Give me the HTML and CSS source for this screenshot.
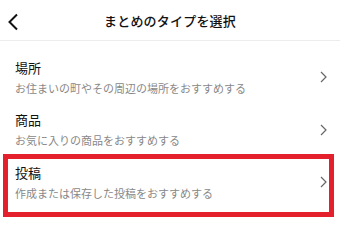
FILE: index.html
```html
<!DOCTYPE html>
<html lang="ja">
<head>
<meta charset="utf-8">
<link rel="stylesheet" href="styles.css">
</head>
<body>
<div class="screen">
  <header class="header">
    <span class="back">
      <svg width="12" height="18" viewBox="0 0 12 18"><path d="M10 1.5 L2.5 9 L10 16.5" fill="none" stroke="#111" stroke-width="2"/></svg>
    </span>
    <h1 class="title">まとめのタイプを選択</h1>
  </header>
  <ul class="list">
    <li class="item">
      <div class="texts">
        <div class="item-title">場所</div>
        <div class="item-sub">お住まいの町やその周辺の場所をおすすめする</div>
      </div>
      <svg class="chev" width="7" height="12" viewBox="0 0 7 12"><path d="M1 1 L6 6 L1 11" fill="none" stroke="#666" stroke-width="1.2"/></svg>
    </li>
    <li class="item">
      <div class="texts">
        <div class="item-title">商品</div>
        <div class="item-sub">お気に入りの商品をおすすめする</div>
      </div>
      <svg class="chev" width="7" height="12" viewBox="0 0 7 12"><path d="M1 1 L6 6 L1 11" fill="none" stroke="#666" stroke-width="1.2"/></svg>
    </li>
    <li class="item highlighted">
      <div class="texts">
        <div class="item-title">投稿</div>
        <div class="item-sub">作成または保存した投稿をおすすめする</div>
      </div>
      <svg class="chev" width="7" height="12" viewBox="0 0 7 12"><path d="M1 1 L6 6 L1 11" fill="none" stroke="#666" stroke-width="1.2"/></svg>
      <span class="mark"></span>
    </li>
  </ul>
</div>
</body>
</html>
```
FILE: styles.css
```css
* { box-sizing: border-box; }
html, body {
  margin: 0;
  padding: 0;
  background: #fff;
}
body {
  font-family: "Noto Sans CJK JP", "Noto Sans", sans-serif;
  color: #111;
}
.screen {
  width: 340px;
  height: 226px;
  overflow: hidden;
}
.header {
  height: 41px;
  border-bottom: 1px solid #ececec;
  display: flex;
  align-items: center;
  justify-content: center;
  position: relative;
}
.back {
  position: absolute;
  left: 7px;
  top: 13px;
  display: flex;
}
.title {
  margin: 0;
  font-size: 13px;
  font-weight: 500;
  line-height: 18px;
  padding-top: 1px;
  letter-spacing: 0.2px;
}
.list {
  list-style: none;
  margin: 0;
  padding: 10px 0 0;
}
.item {
  position: relative;
  height: 52.5px;
  display: flex;
  align-items: center;
  padding: 0 13px 0 15px;
}
.texts {
  flex: 1;
}
.item-title {
  font-size: 13px;
  line-height: 18px;
  color: #111;
}
.item-sub {
  margin-top: 3px;
  font-size: 11px;
  line-height: 16px;
  color: #888;
}
.chev {
  display: block;
}
.mark {
  position: absolute;
  left: 3px;
  right: 6px;
  top: -2.5px;
  bottom: -8px;
  border: 5px solid #e3202c;
  pointer-events: none;
}
```
